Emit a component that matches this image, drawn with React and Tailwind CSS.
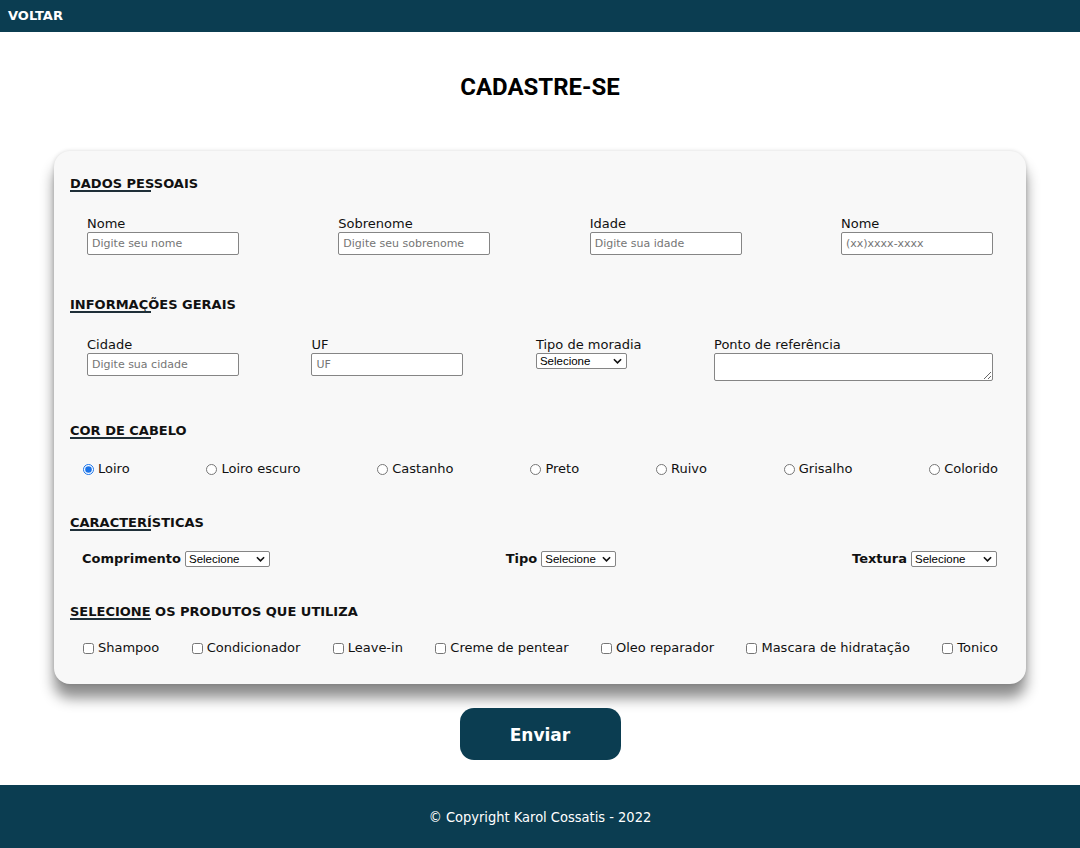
import { useState } from "react";

const font = "font-['DejaVu_Sans',Verdana,sans-serif]";

const HAIR = ["Loiro", "Loiro escuro", "Castanho", "Preto", "Ruivo", "Grisalho", "Colorido"];
const PRODUCTS = [
  "Shampoo",
  "Condicionador",
  "Leave-in",
  "Creme de pentear",
  "Oleo reparador",
  "Mascara de hidratação",
  "Tonico",
];

function Heading({ children, className = "" }) {
  return (
    <div className={`flex flex-col ${className}`}>
      <h2 className="pt-[1px] text-[13px] leading-[16px] font-bold text-[#111]">{children}</h2>
      <div className="-mt-[2px] h-[2px] w-[81px] bg-[#1f2f38]" />
    </div>
  );
}

function Field({ label, placeholder }) {
  return (
    <label className="flex flex-col">
      <span className="text-[13px] leading-[16px] text-[#111]">{label}</span>
      <input
        placeholder={placeholder}
        className="h-[23px] w-[152px] rounded-[2px] border border-[#858585] bg-white px-[4px] text-[11px] text-[#111] outline-none placeholder:text-[#757575]"
      />
    </label>
  );
}

function Select({ width }) {
  return (
    <div className="relative inline-flex" style={{ width }}>
      <select className="h-[16px] w-full appearance-none rounded-[2px] border border-[#858585] bg-white pl-[3px] font-['Liberation_Sans',Arial,sans-serif] text-[11.5px] leading-[14px] font-normal text-black outline-none">
        <option>Selecione</option>
      </select>
      <svg
        viewBox="0 0 10 6"
        className="pointer-events-none absolute right-[5px] top-[5px] h-[6px] w-[9px]"
        fill="none"
        stroke="#111"
        strokeWidth="1.8"
      >
        <path d="M1 1l4 4 4-4" />
      </svg>
    </div>
  );
}

export default function App() {
  const [hair, setHair] = useState("Loiro");

  return (
    <div className={`min-h-[848px] bg-white ${font}`}>
      <header className="flex h-8 items-center bg-[#0b3d51] px-2">
        <a className="text-[13px] font-bold text-white">VOLTAR</a>
      </header>

      <h1 className="mt-[41px] text-center font-['Roboto',Arial,sans-serif] text-[24px] leading-[28px] font-bold text-black">
        CADASTRE-SE
      </h1>

      <form className="mx-auto mt-[50px] w-[972px] rounded-[16px] bg-[#f8f8f8] px-4 pt-6 pb-[28px] shadow-[0_14px_14px_rgba(0,0,0,0.45),0_0_4px_rgba(0,0,0,0.15)]">
        <Heading>DADOS PESSOAIS</Heading>
        <div className="mt-6 flex justify-between px-[17px]">
          <Field label="Nome" placeholder="Digite seu nome" />
          <Field label="Sobrenome" placeholder="Digite seu sobrenome" />
          <Field label="Idade" placeholder="Digite sua idade" />
          <Field label="Nome" placeholder="(xx)xxxx-xxxx" />
        </div>

        <Heading className="mt-[41px]">INFORMAÇÕES GERAIS</Heading>
        <div className="mt-6 flex items-start justify-between px-[17px]">
          <Field label="Cidade" placeholder="Digite sua cidade" />
          <Field label="UF" placeholder="UF" />
          <label className="flex flex-col">
            <span className="text-[13px] leading-[16px] text-[#111]">Tipo de moradia</span>
            <Select width="91px" />
          </label>
          <label className="flex flex-col">
            <span className="text-[13px] leading-[16px] text-[#111]">Ponto de referência</span>
            <textarea className="h-[28px] w-[279px] rounded-[2px] border border-[#858585] bg-white outline-none" />
          </label>
        </div>

        <Heading className="mt-[41px]">COR DE CABELO</Heading>
        <div className="mt-[22px] flex justify-between pr-[12px] pl-[13px]">
          {HAIR.map((h) => (
            <label key={h} className="flex items-center text-[13px] leading-[16px] text-[#111]">
              <input
                type="radio"
                name="hair"
                checked={hair === h}
                onChange={() => setHair(h)}
                className="mr-[4px] h-[11px] w-[11px] accent-[#1a73e8]"
              />
              {h}
            </label>
          ))}
        </div>

        <Heading className="mt-[37px]">CARACTERÍSTICAS</Heading>
        <div className="mt-5 flex items-center justify-between pr-[13px] pl-[12px]">
          {[
            ["Comprimento", "85px"],
            ["Tipo", "75px"],
            ["Textura", "86px"],
          ].map(([l, w]) => (
            <label key={l} className="flex items-center gap-[4px] text-[13px] leading-[16px] font-bold text-[#111]">
              {l}
              <Select width={w} />
            </label>
          ))}
        </div>

        <Heading className="mt-[36px]">SELECIONE OS PRODUTOS QUE UTILIZA</Heading>
        <div className="mt-5 flex justify-between pr-[12px] pl-[13px]">
          {PRODUCTS.map((p) => (
            <label key={p} className="flex items-center text-[13px] leading-[16px] text-[#111]">
              <input type="checkbox" className="mr-[4px] h-[11px] w-[11px]" />
              {p}
            </label>
          ))}
        </div>
      </form>

      <div className="mt-6 flex justify-center">
        <button
          type="button"
          className="h-[52px] w-[161px] rounded-[14px] bg-[#0b3d51] pt-[3px] text-[17px] font-bold text-white"
        >
          Enviar
        </button>
      </div>

      <footer className="mt-[25px] flex h-[63px] items-center justify-center bg-[#0b3d51] pt-[2px] font-['DejaVu_Sans_Condensed','Liberation_Sans',sans-serif] text-[14.5px] text-white">
        © Copyright Karol Cossatis - 2022
      </footer>
    </div>
  );
}
